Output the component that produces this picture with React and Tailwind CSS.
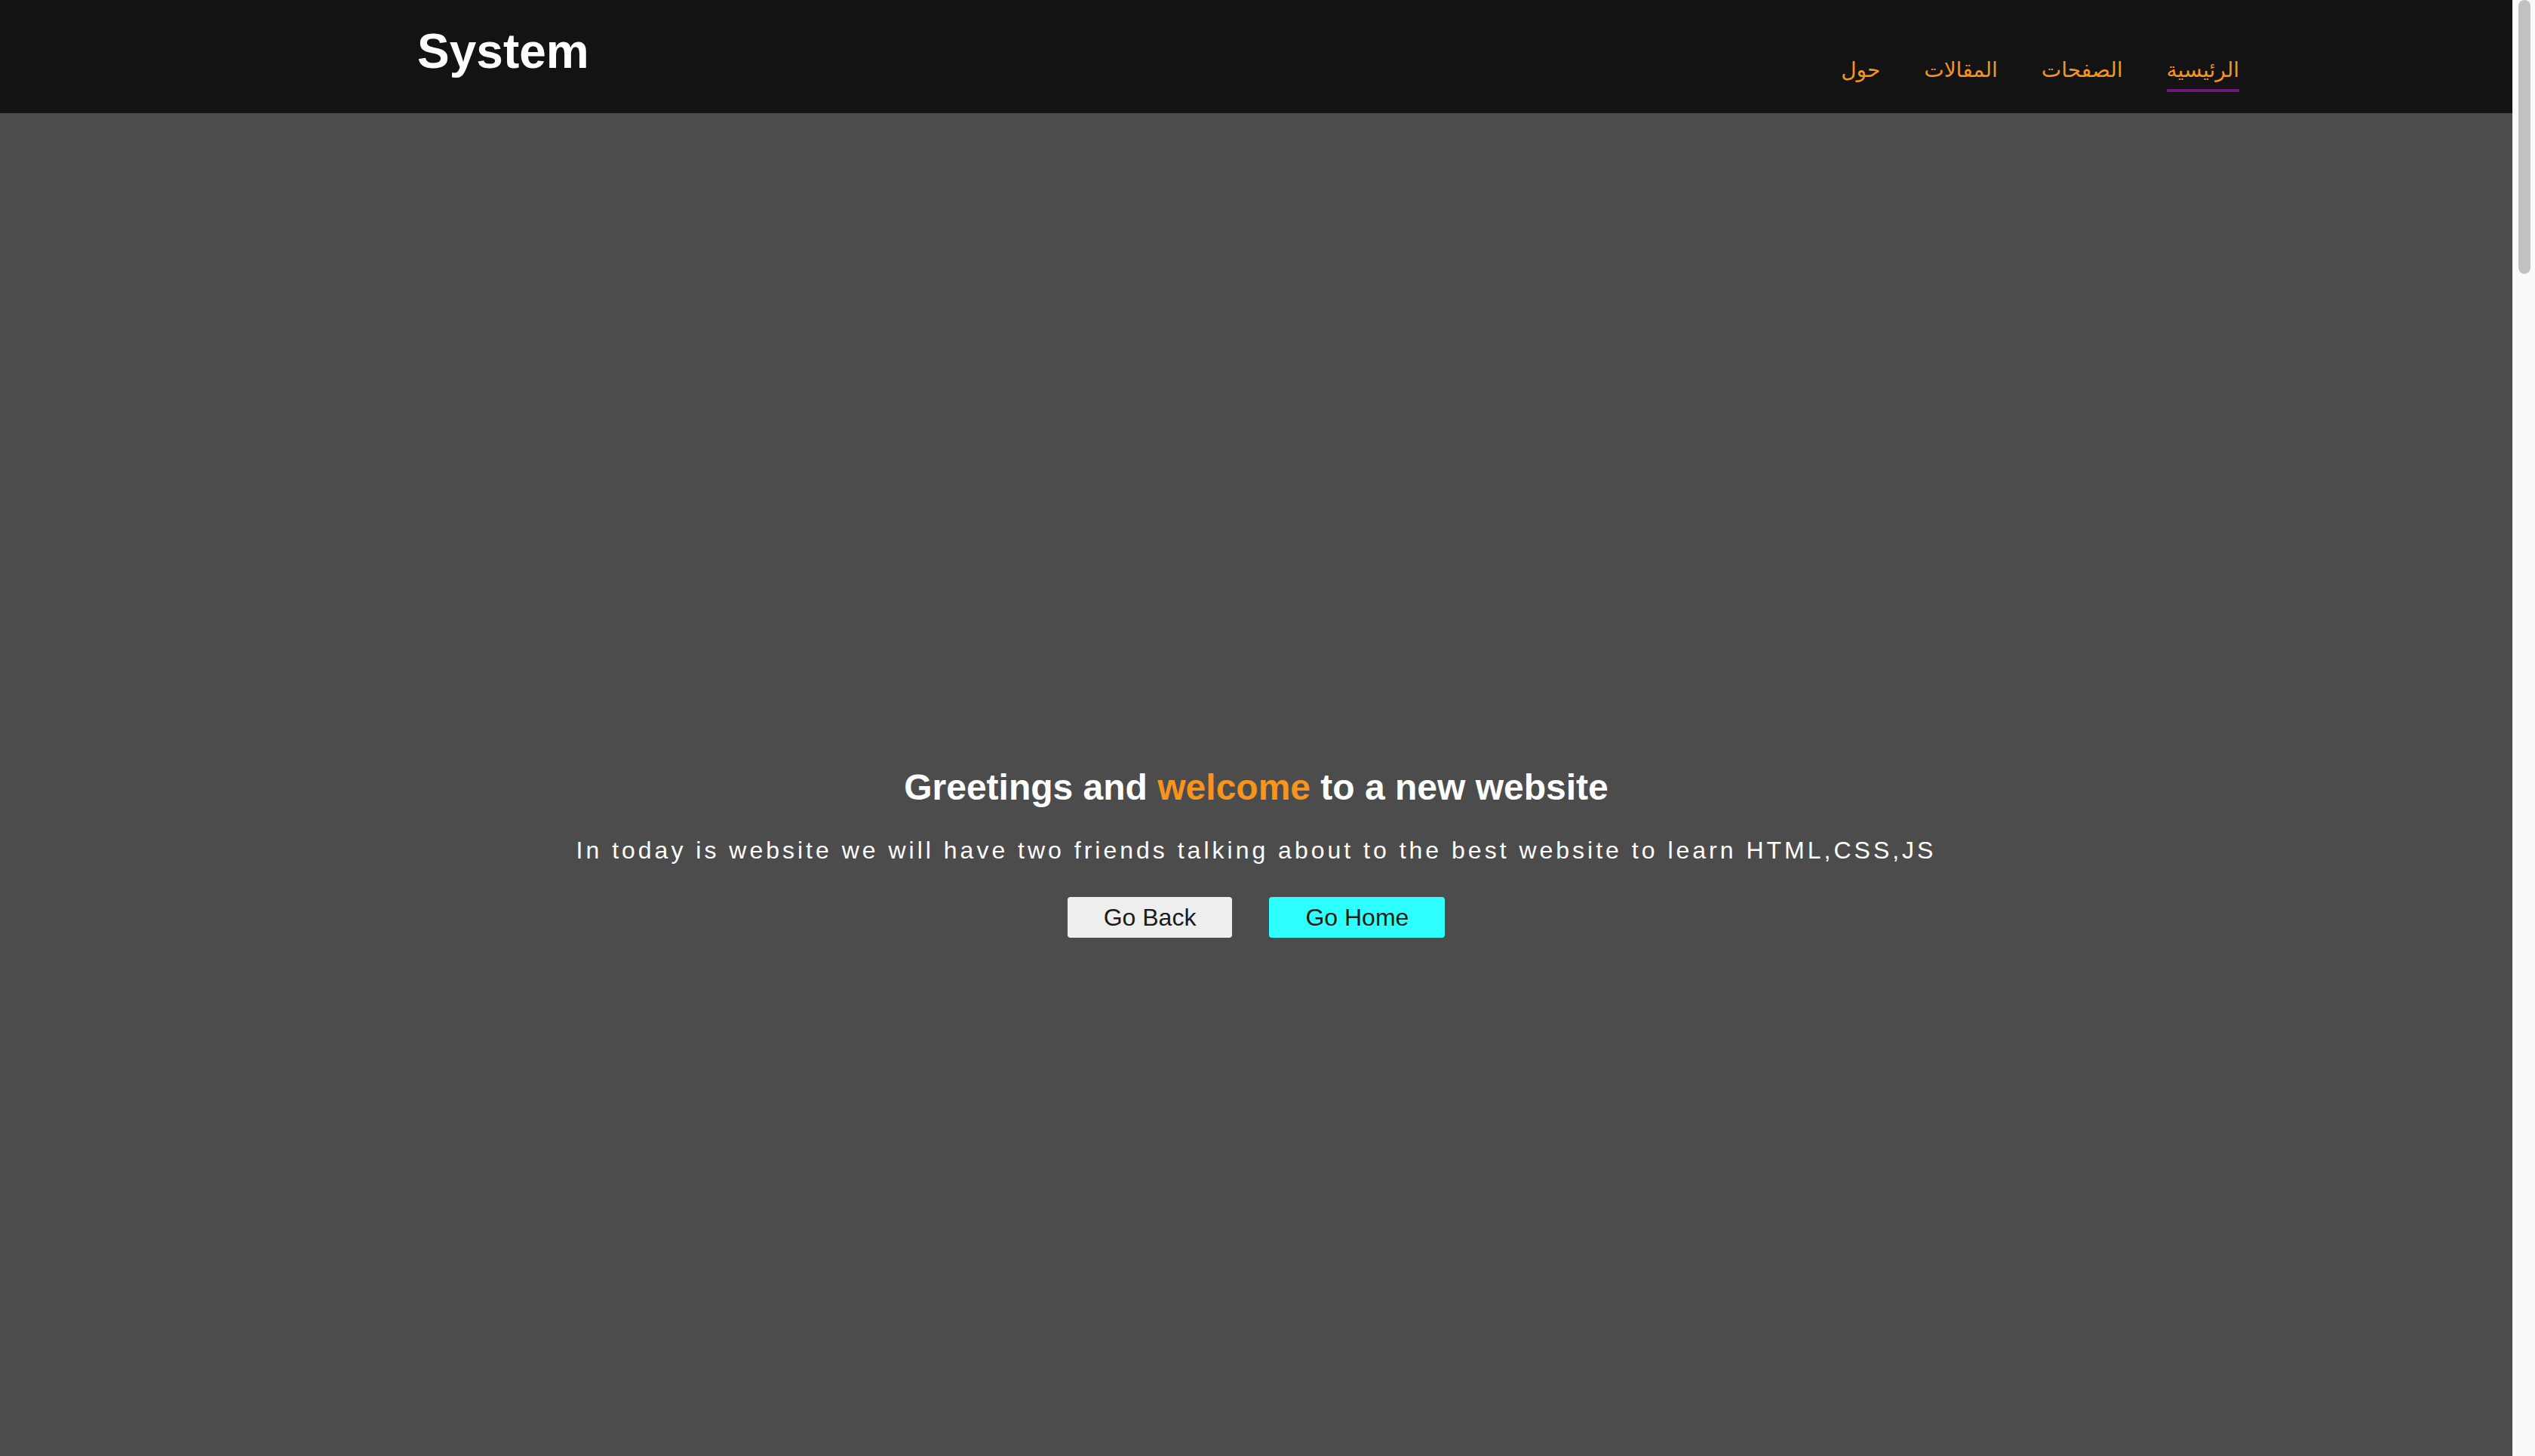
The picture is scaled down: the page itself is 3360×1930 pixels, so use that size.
import React from 'react';

const links = [
  { label: 'الرئيسية', active: true },
  { label: 'الصفحات' },
  { label: 'المقالات' },
  { label: 'حول' },
];

function Header() {
  return (
    <header className="h-[150px] shrink-0 bg-[#131313] flex justify-between items-start pl-[553px] pr-[362px]">
      {/* Logo */}
      <h1 className="mt-[36px] text-[64px] leading-none font-bold text-white font-['Liberation_Sans',Arial,sans-serif]">
        System
      </h1>

      {/* Nav */}
      <nav dir="rtl" className="flex gap-[58px] font-['DejaVu_Sans',sans-serif]">
        {links.map(link => (
          <a
            key={link.label}
            href="#"
            className={`mt-[77px] text-[28px] leading-[32px] pb-[9px] text-[#f7941d] border-b-4 ${
              link.active ? 'border-[#6a1a7a]' : 'border-transparent'
            }`}
          >
            {link.label}
          </a>
        ))}
      </nav>
    </header>
  );
}

function Hero() {
  return (
    <section className="flex-1 flex flex-col items-center pt-[866px] text-white font-['Liberation_Sans',Arial,sans-serif]">
      <h2 className="text-[48px] leading-[56px] font-bold">
        Greetings and <span className="text-[#f7941d]">welcome</span> to a new website
      </h2>
      <p className="mt-[35px] text-[32px] leading-[40px] tracking-[4px]">
        In today is website we will have two friends talking about to the best website to learn HTML,CSS,JS
      </p>
      <div className="mt-[42px] flex gap-[49px]">
        <button className="h-[54px] px-[48px] rounded-[4px] bg-[#eeeeee] text-[#1a1a1a] text-[32px] leading-none">
          Go Back
        </button>
        <button className="h-[54px] px-[48px] rounded-[4px] bg-[#2effff] text-[#1a1a1a] text-[32px] leading-none">
          Go Home
        </button>
      </div>
    </section>
  );
}

// browser scrollbar as seen in the screenshot
function ScrollRail() {
  return (
    <div className="w-[30px] shrink-0 h-screen bg-[#fafafa] border-l border-[#efefef] pl-[7px] pr-[6px]">
      <div className="h-[363px] rounded-full bg-[#c1c1c1]" />
    </div>
  );
}

export default function App() {
  return (
    <div className="h-screen flex overflow-hidden">
      <div className="flex-1 flex flex-col bg-[#4c4c4c]">
        <Header />
        <Hero />
      </div>
      <ScrollRail />
    </div>
  );
}
